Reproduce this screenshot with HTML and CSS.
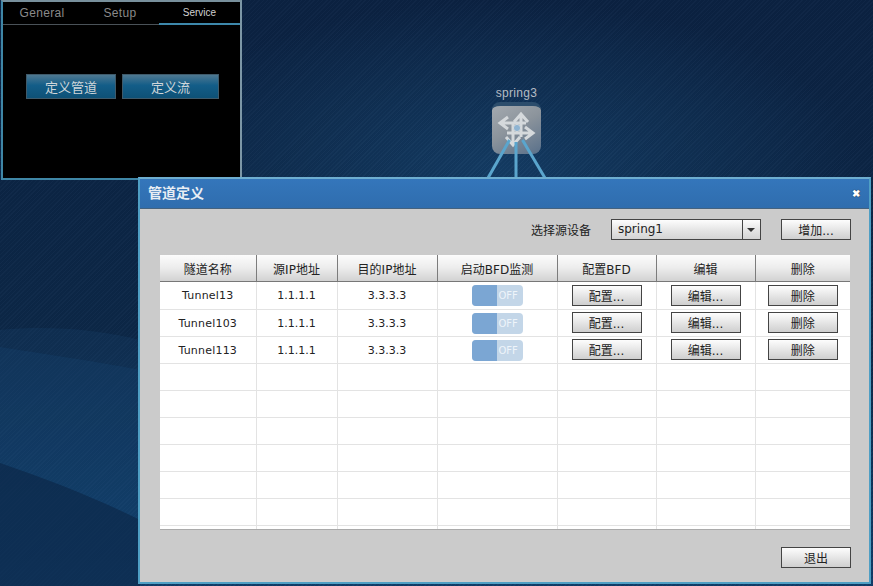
FILE: index.html
```html
<!DOCTYPE html>
<html lang="zh">

<head>
  <meta charset="UTF-8">
  <title>管道定义</title>
  <link rel="stylesheet" href="styles.css">
</head>

<body>
  <div class="desktop">
    <svg class="waves" width="873" height="586" viewBox="0 0 873 586">
      <path d="M0 330 C50 325 100 330 140 340 L140 586 L0 586Z" fill="#1a4a78" opacity=".22" />
      <path d="M0 347 C50 355 100 362 140 370 L140 586 L0 586Z" fill="#1a4f82" opacity=".2" />
      <path d="M0 463 C50 480 100 500 140 520 L140 586 L0 586Z" fill="#0b2444" opacity=".6" />
    </svg>

    <!-- panel top left -->
    <div class="panel">
      <div class="tabs">
        <span class="tab">General</span>
        <span class="tab">Setup</span>
        <span class="tab tab-active">Service</span>
      </div>
      <div class="panel-actions">
        <button class="blue-btn btn-pipe">定义管道</button>
        <button class="blue-btn btn-flow">定义流</button>
      </div>
    </div>

    <!-- topology node -->
    <div class="node">
      <div class="node-name">spring3</div>
      <div class="node-icon">
        <svg width="49" height="48" viewBox="0 0 49 48">
          <g fill="none" stroke="#d5d9dc" stroke-width="3">
            <path d="M29 31 V10 M22 16 L29 8 L36 16" />
            <path d="M21 16 V37 M14 31 L21 39 L28 31" />
            <path d="M34 17 H10 M16 11 L8 17 L16 23" />
            <path d="M15 27 H39 M33 21 L41 27 L33 33" />
          </g>
          <circle cx="25" cy="22" r="3.6" fill="#8fb4d2" stroke="#d5d9dc" />
        </svg>
      </div>
    </div>
    <svg class="links" width="80" height="50" viewBox="0 0 80 50">
      <path d="M32.5 12 L11 50 M39 14 V50 M45.5 12 L68 50" stroke="#5aa5cd" stroke-width="3" fill="none" />
    </svg>

    <!-- dialog -->
    <div class="dialog">
      <div class="dialog-title">
        <span class="dialog-name">管道定义</span>
        <span class="close">✖</span>
      </div>
      <div class="dialog-body">
        <div class="toolbar">
          <span class="toolbar-label">选择源设备</span>
          <div class="select">
            <span class="select-value">spring1</span>
            <span class="select-arrow"></span>
          </div>
          <button class="btn btn-add">增加...</button>
        </div>

        <div class="table-wrap">
          <table>
            <colgroup>
              <col class="c1"><col class="c2"><col class="c3"><col class="c4"><col class="c5"><col class="c6"><col class="c7">
            </colgroup>
            <thead>
              <tr>
                <th>隧道名称</th><th>源IP地址</th><th>目的IP地址</th><th>启动BFD监测</th><th>配置BFD</th><th>编辑</th><th>删除</th>
              </tr>
            </thead>
            <tbody>
              <tr>
                <td>Tunnel13</td><td>1.1.1.1</td><td>3.3.3.3</td>
                <td><div class="toggle"><span class="knob"></span><span class="off">OFF</span></div></td>
                <td><button class="btn">配置...</button></td>
                <td><button class="btn">编辑...</button></td>
                <td><button class="btn">删除</button></td>
              </tr>
              <tr>
                <td>Tunnel103</td><td>1.1.1.1</td><td>3.3.3.3</td>
                <td><div class="toggle"><span class="knob"></span><span class="off">OFF</span></div></td>
                <td><button class="btn">配置...</button></td>
                <td><button class="btn">编辑...</button></td>
                <td><button class="btn">删除</button></td>
              </tr>
              <tr>
                <td>Tunnel113</td><td>1.1.1.1</td><td>3.3.3.3</td>
                <td><div class="toggle"><span class="knob"></span><span class="off">OFF</span></div></td>
                <td><button class="btn">配置...</button></td>
                <td><button class="btn">编辑...</button></td>
                <td><button class="btn">删除</button></td>
              </tr>
              <tr><td></td><td></td><td></td><td></td><td></td><td></td><td></td></tr>
              <tr><td></td><td></td><td></td><td></td><td></td><td></td><td></td></tr>
              <tr><td></td><td></td><td></td><td></td><td></td><td></td><td></td></tr>
              <tr><td></td><td></td><td></td><td></td><td></td><td></td><td></td></tr>
              <tr><td></td><td></td><td></td><td></td><td></td><td></td><td></td></tr>
              <tr><td></td><td></td><td></td><td></td><td></td><td></td><td></td></tr>
              <tr><td></td><td></td><td></td><td></td><td></td><td></td><td></td></tr>
            </tbody>
          </table>
        </div>

        <div class="dialog-footer">
          <button class="btn">退出</button>
        </div>
      </div>
    </div>
  </div>
</body>

</html>
```

FILE: styles.css
```css
body {
  margin: 0;
  font-family: "DejaVu Sans", "Noto Sans CJK SC", sans-serif;
  font-size: 12px;
  overflow: hidden;
}

.desktop {
  position: relative;
  width: 873px;
  height: 586px;
  overflow: hidden;
  background:
    repeating-linear-gradient(135deg, rgba(255, 255, 255, .018) 0 1px, rgba(0, 0, 0, .03) 1px 3px),
    radial-gradient(ellipse 360px 170px at 500px 170px, #143c64 0%, rgba(20, 60, 100, 0) 100%),
    linear-gradient(180deg, #0b2242 0%, #0c2848 60%, #0f3c68 100%);
}

.waves {
  position: absolute;
  left: 0;
  top: 0;
}

/* panel */
.panel {
  position: absolute;
  left: 1px;
  top: 0;
  width: 237px;
  height: 176px;
  background: #000;
  border: 2px solid #3f86a6;
  border-top-color: #78909c;
  border-right-color: #7d97a6;
}

.tabs {
  display: flex;
  height: 22px;
  border-bottom: 1px solid #4a5258;
  font-family: "Liberation Sans", sans-serif;
}

.tab {
  display: flex;
  align-items: center;
  justify-content: center;
  width: 78px;
  color: #8a8a8a;
  font-size: 12px;
  letter-spacing: .3px;
}

.tab-active {
  flex: 1;
  color: #d0d0d0;
  font-size: 10px;
  letter-spacing: 0;
  border-bottom: 2px solid #3d88ab;
  margin-bottom: -1px;
}

.panel-actions {
  display: flex;
  gap: 6px;
  padding: 49px 0 0 23px;
}

.blue-btn {
  height: 25px;
  padding: 0;
  border: 1px solid #3f5a6a;
  background: linear-gradient(180deg, #4e7891 0%, #135d88 45%, #0e5176 100%);
  color: #cfd6da;
  font-family: "Noto Sans CJK SC", sans-serif;
  font-size: 13px;
}

.btn-pipe {
  width: 90px;
}

.btn-flow {
  width: 97px;
}

/* node */
.links {
  position: absolute;
  left: 477px;
  top: 128px;
}

.node {
  position: absolute;
  left: 492px;
  top: 86px;
  width: 49px;
}

.node-name {
  margin-left: -10px;
  width: 69px;
  text-align: center;
  font-family: "Liberation Sans", sans-serif;
  color: #b4bcc4;
  font-size: 12px;
  letter-spacing: .3px;
}

.node-icon {
  height: 48px;
  margin-top: 2px;
  border-top: 4px solid #2c4d6c;
  border-radius: 8px;
  background: linear-gradient(150deg, #a3a9af 0%, #8c949c 45%, #59708a 100%);
}

/* dialog */
.dialog {
  position: absolute;
  left: 138px;
  top: 177px;
  width: 729px;
  height: 403px;
  border: 2px solid #4f9fc4;
  border-top-color: #6eaed0;
  background: #cbcbcb;
}

.dialog-title {
  display: flex;
  align-items: center;
  justify-content: space-between;
  height: 29px;
  padding: 0 9px 0 8px;
  background: linear-gradient(180deg, #3476bb 0%, #2f6dae 100%);
  border-bottom: 1px solid #45627e;
  color: #e8eef4;
  font-family: "Noto Sans CJK SC", sans-serif;
  font-size: 14px;
  font-weight: bold;
}

.dialog-name {
  padding-bottom: 3px;
}

.close {
  padding-bottom: 2px;
  font-size: 10px;
  color: #fff;
  text-shadow: 0 0 1px #000;
}

.dialog-body {
  padding: 10px 18px 0 20px;
}

.toolbar {
  display: flex;
  align-items: center;
  justify-content: flex-end;
  height: 21px;
}

.toolbar-label {
  margin-right: 20px;
  color: #222;
}

.btn {
  width: 70px;
  height: 21px;
  padding: 0;
  border: 1px solid #444;
  background: linear-gradient(180deg, #fdfdfd 0%, #e6e6e6 50%, #cfcfcf 100%);
  color: #222;
  font-family: inherit;
  font-size: 12px;
}

.btn-add {
  margin-left: 20px;
}

.select {
  display: flex;
  width: 148px;
  height: 19px;
  border: 1px solid #444;
  background: linear-gradient(180deg, #fdfdfd 0%, #e6e6e6 50%, #d4d4d4 100%);
}

.select-value {
  flex: 1;
  padding-left: 6px;
  line-height: 19px;
  color: #222;
}

.select-arrow {
  position: relative;
  width: 17px;
  border-left: 1px solid #444;
}

.select-arrow::after {
  content: "";
  position: absolute;
  left: 4px;
  top: 8px;
  border: 4px solid transparent;
  border-top: 4px solid #333;
  border-bottom: 0;
}

.table-wrap {
  width: 690px;
  height: 274px;
  margin-top: 15px;
  background: #fff;
  border-bottom: 1px solid #aaa;
  overflow: hidden;
}

table {
  width: 690px;
  table-layout: fixed;
  border-collapse: collapse;
}

.c1 { width: 96px; }
.c2 { width: 81px; }
.c3 { width: 100px; }
.c4 { width: 120px; }
.c5 { width: 99px; }
.c6 { width: 99px; }
.c7 { width: 95px; }

th {
  height: 26px;
  padding: 0;
  font-weight: normal;
  color: #222;
  background: linear-gradient(180deg, #fcfcfc 0%, #ececec 50%, #d2d2d2 100%);
  border-right: 1px solid #7c7c7c;
  border-bottom: 1px solid #777;
}

th:last-child,
td:last-child {
  border-right: 0;
}

td {
  height: 26px;
  padding: 0;
  text-align: center;
  color: #222;
  font-size: 11px;
  border-right: 1px solid #e3e3e3;
  border-bottom: 1px solid #e3e3e3;
}

td:first-child {
  letter-spacing: .2px;
}

tbody tr:first-child td {
  height: 27px;
}

tbody tr + tr td > * {
  margin-bottom: 2px;
}

.toggle {
  display: flex;
  width: 51px;
  height: 21px;
  margin: 0 auto;
  border-radius: 4px;
  overflow: hidden;
  background: #c3d6e8;
}

.knob {
  width: 25px;
  background: #7ba6d3;
}

.off {
  flex: 1;
  line-height: 21px;
  text-align: left;
  padding-left: 2px;
  color: #eef4fa;
  font-size: 10px;
}

.dialog-footer {
  display: flex;
  justify-content: flex-end;
  margin-top: 17px;
}
```
